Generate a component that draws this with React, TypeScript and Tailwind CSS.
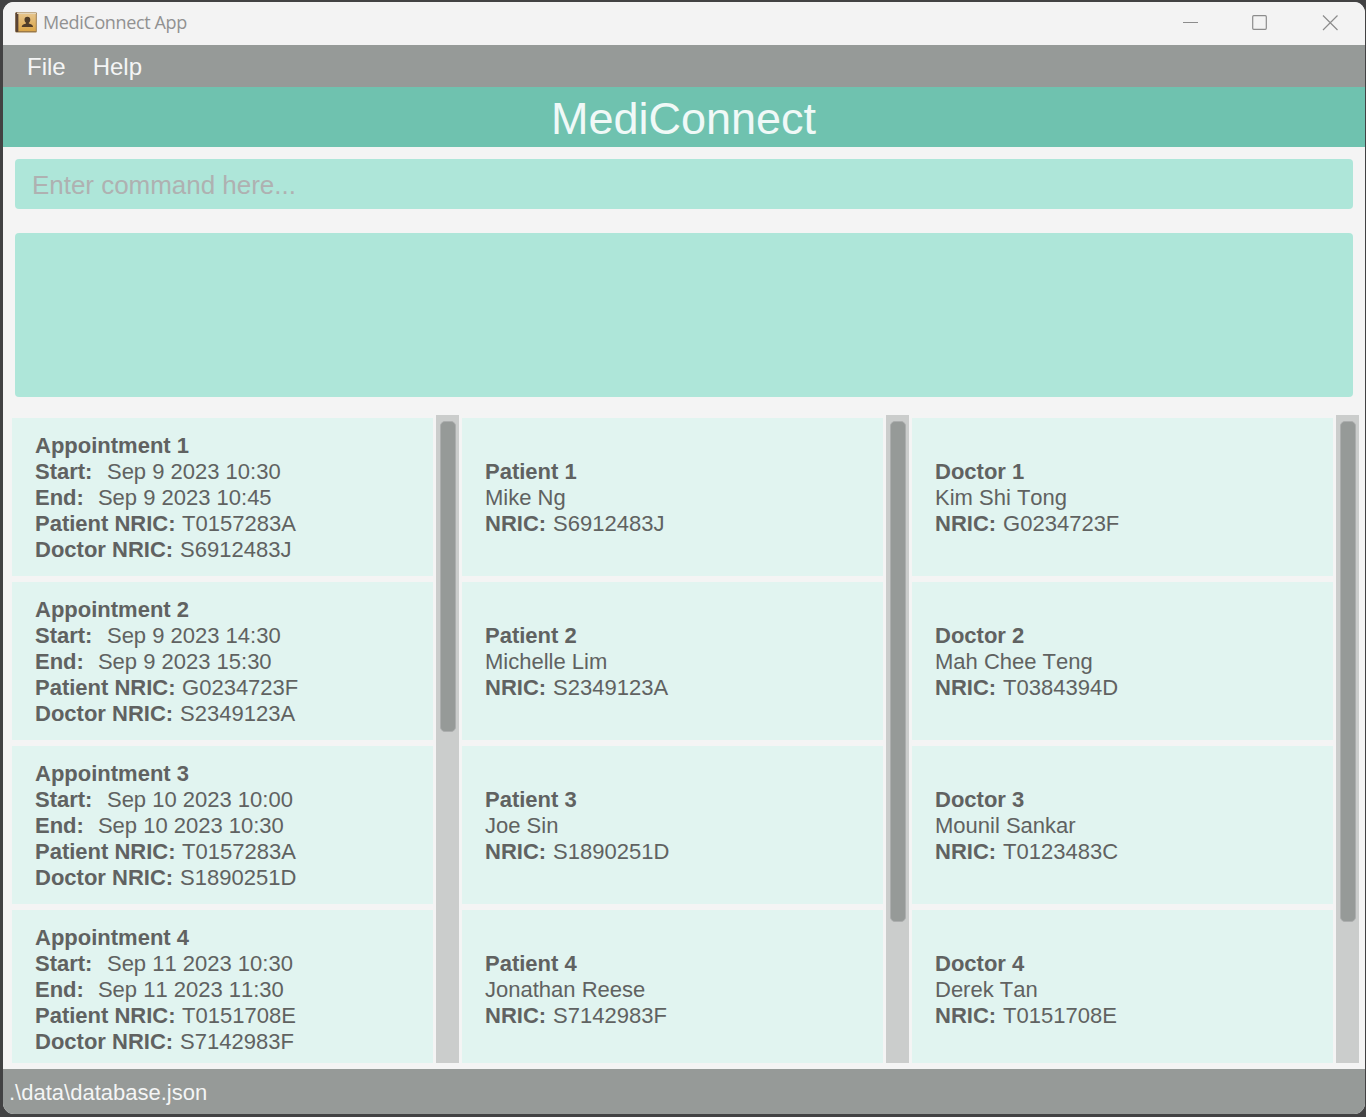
import React from "react";

type Person = { title: string; name: string; nric: string };
type Appointment = { start: string; end: string; patient: string; doctor: string };

const appointments: Appointment[] = [
  { start: "Sep 9 2023 10:30", end: "Sep 9 2023 10:45", patient: "T0157283A", doctor: "S6912483J" },
  { start: "Sep 9 2023 14:30", end: "Sep 9 2023 15:30", patient: "G0234723F", doctor: "S2349123A" },
  { start: "Sep 10 2023 10:00", end: "Sep 10 2023 10:30", patient: "T0157283A", doctor: "S1890251D" },
  { start: "Sep 11 2023 10:30", end: "Sep 11 2023 11:30", patient: "T0151708E", doctor: "S7142983F" },
];

const patients: Person[] = [
  { title: "Patient 1", name: "Mike Ng", nric: "S6912483J" },
  { title: "Patient 2", name: "Michelle Lim", nric: "S2349123A" },
  { title: "Patient 3", name: "Joe Sin", nric: "S1890251D" },
  { title: "Patient 4", name: "Jonathan Reese", nric: "S7142983F" },
];

const doctors: Person[] = [
  { title: "Doctor 1", name: "Kim Shi Tong", nric: "G0234723F" },
  { title: "Doctor 2", name: "Mah Chee Teng", nric: "T0384394D" },
  { title: "Doctor 3", name: "Mounil Sankar", nric: "T0123483C" },
  { title: "Doctor 4", name: "Derek Tan", nric: "T0151708E" },
];

function Field({ label, value, gap }: { label: string; value: string; gap: string }) {
  return (
    <div className="flex">
      <span className="font-bold">{label}</span>
      <span className={gap}>{value}</span>
    </div>
  );
}

function Card({ children }: { children: React.ReactNode }) {
  return (
    <div className="flex h-[158px] shrink-0 flex-col justify-center bg-[#e1f4f0] pt-0.5 pl-[23px] text-[22px] leading-[26px] whitespace-nowrap text-[#606261] [font-kerning:none]">
      {children}
    </div>
  );
}

function Column({ thumb, children }: { thumb: string; children: React.ReactNode }) {
  return (
    <div className="flex h-[648px] w-[447px] gap-[3px]">
      <div className="flex w-[421px] flex-col gap-1.5 overflow-hidden pt-[3px]">{children}</div>
      <div className="w-[23px] bg-[#cbcdcc] pt-1.5 pl-1">
        <div className={`w-4 rounded-[5px] border border-[#acaeae] bg-[#969a98] ${thumb}`} />
      </div>
    </div>
  );
}

function PersonCard({ person }: { person: Person }) {
  return (
    <Card>
      <div className="font-bold">{person.title}</div>
      <div>{person.name}</div>
      <Field label="NRIC:" value={person.nric} gap="ml-[7px]" />
    </Card>
  );
}

function BookIcon() {
  return (
    <svg className="-mt-0.5" width="22" height="21" viewBox="0 0 22 21">
      <defs>
        <linearGradient id="cover" x1="0" y1="0" x2="0" y2="1">
          <stop offset="0" stopColor="#e6c48a" />
          <stop offset="1" stopColor="#dba648" />
        </linearGradient>
      </defs>
      <rect x="0.3" y="0.3" width="21.500" height="20.200" rx="1" fill="#9c7a48" />
      <rect x="0.500" y="0.500" width="3" height="19.500" rx="1" fill="#594335" />
      <rect x="3.500" y="2" width="17.300" height="17" fill="url(#cover)" />
      <rect x="2" y="0.700" width="19" height="1.200" fill="#eee0c6" />
      <path d="M12.400 4.800c1.900 0 2.900 1.300 2.900 3 0 1.400-.6 2.400-1.500 3v.8c1.500 1 4.200.8 4.200 3.400H6.800c0-2.600 2.700-2.400 4.200-3.400v-.8c-.9-.6-1.500-1.600-1.500-3 0-1.700 1-3 2.900-3z" fill="#503d29" />
    </svg>
  );
}

export default function App() {
  return (
    <div className="h-[1117px] w-[1366px] overflow-hidden bg-[#424243] pt-0.5 pl-[3px] font-['Liberation_Sans',Arial,sans-serif]">
      <div className="flex h-[1112px] w-[1362px] flex-col overflow-hidden rounded-[11px] bg-[#f4f4f4]">
        <div className="flex h-[43px] shrink-0 items-center bg-[#f3f3f3] pl-3">
          <BookIcon />
          <span className="-mt-1 ml-[6px] font-['Open_Sans',sans-serif] text-[18px] leading-6 tracking-[-0.36px] text-[#919191]">MediConnect App</span>
          <svg className="ml-auto" width="194" height="43" viewBox="0 0 194 43" fill="none" stroke="#8c8c8c" strokeWidth="1.2">
            <path d="M12 20.500h15" />
            <rect x="81.700" y="13.700" width="13.600" height="13.600" rx="1" />
            <path d="M152 13.500l14.500 14.500M166.500 13.500L152 28" />
          </svg>
        </div>
        <div className="flex h-[42px] shrink-0 items-center gap-[27px] bg-[#969a98] pt-0.5 pl-6 text-[24px] text-[#f4f5f5]">
          <span>File</span>
          <span>Help</span>
        </div>
        <div className="flex h-[60px] shrink-0 items-center justify-center bg-[#6fc2af] pt-0.5 pr-px text-[45px] leading-none text-[#f0f9f7]">
          MediConnect
        </div>
        <div className="mx-3 mt-3 flex h-[50px] shrink-0 items-center rounded-[4px] bg-[#aee6d9] pt-0.5 pl-[17px] text-[26px] tracking-[-0.03px] text-[#afb1b1]">
          Enter command here...
        </div>
        <div className="mx-3 mt-6 h-[164px] shrink-0 rounded-[4px] bg-[#aee6d9]" />
        <div className="mt-[18px] flex shrink-0 gap-[3px] pl-[9px]">
          <Column thumb="h-[311px]">
            {appointments.map((a, i) => (
              <Card key={i}>
                <div className="font-bold">Appointment {i + 1}</div>
                <Field label="Start:" value={a.start} gap="ml-[14.5px]" />
                <Field label="End:" value={a.end} gap="ml-[14px]" />
                <Field label="Patient NRIC:" value={a.patient} gap="ml-[6.5px]" />
                <Field label="Doctor NRIC:" value={a.doctor} gap="ml-[7px]" />
              </Card>
            ))}
          </Column>
          <Column thumb="h-[501px]">
            {patients.map((p) => (
              <PersonCard key={p.title} person={p} />
            ))}
          </Column>
          <Column thumb="h-[501px]">
            {doctors.map((p) => (
              <PersonCard key={p.title} person={p} />
            ))}
          </Column>
        </div>
        <div className="mt-1.5 flex h-[45px] shrink-0 items-center bg-[#969a98] pt-0.5 pl-[6px] text-[22px] text-[#f4f5f5]">
          {".\\data\\database.json"}
        </div>
      </div>
    </div>
  );
}
